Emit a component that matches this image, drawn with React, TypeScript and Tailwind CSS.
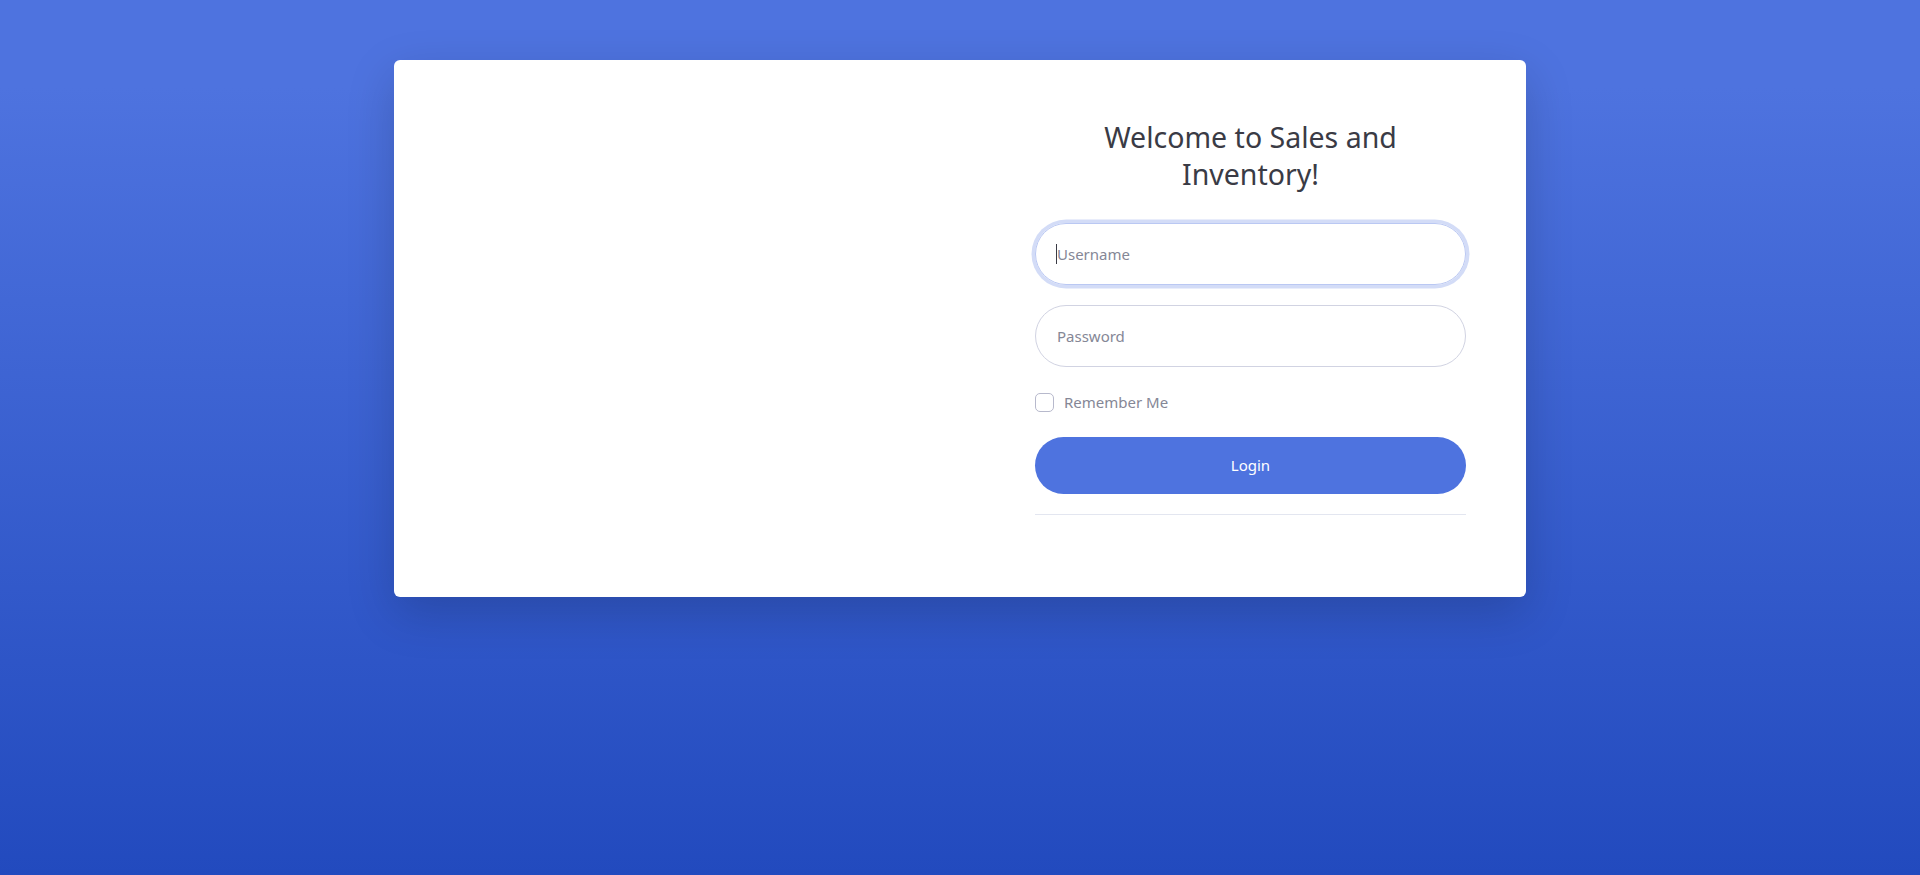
import React from "react";

export default function App() {
  return (
    <div
      className="min-h-[875px] w-full bg-[linear-gradient(180deg,#4e73df_10%,#224abe_100%)] pt-[60px]"
      style={{ fontFamily: '"Noto Sans", "Open Sans", sans-serif' }}
    >
      <div className="mx-auto flex w-[1132px] rounded-[6px] bg-white shadow-[0_16px_48px_rgba(0,0,0,0.175)]">
        <div className="w-[581px]" />
        <div className="w-[551px] px-[60px] pt-[59px] pb-[82px]">
          <h1 className="text-center text-[28.5px] leading-[37px] font-normal text-[#3a3b45]">
            Welcome to Sales and
            <br />
            Inventory!
          </h1>
          <form className="mt-[30px]" onSubmit={(e) => e.preventDefault()}>
            <div className="relative">
              <input
                type="text"
                placeholder="Username"
                className="block h-[62px] w-full rounded-full border border-[#bac8f3] px-[21px] text-[15px] text-[#6e707e] placeholder:text-[#858796] outline-none shadow-[0_0_0_3.5px_rgba(78,115,223,0.25)]"
              />
              <span className="pointer-events-none absolute left-[21px] top-[21px] h-[20px] w-px bg-[#3a3b45]" />
            </div>
            <input
              type="password"
              placeholder="Password"
              className="mt-[20px] block h-[62px] w-full rounded-full border border-[#d1d3e2] px-[21px] text-[15px] text-[#6e707e] placeholder:text-[#858796] outline-none"
            />
            <label className="mt-[23px] flex h-[24px] items-center gap-[10px] text-[15px] text-[#858796]">
              <span className="block h-[19px] w-[19px] rounded-[5px] border border-[#b7b9cc] bg-white" />
              <span>Remember Me</span>
            </label>
            <button
              type="submit"
              className="mt-[23px] block h-[57px] w-full rounded-full bg-[#4e73df] text-center text-[15px] text-white"
            >
              Login
            </button>
            <hr className="mt-[20px] border-0 border-t border-[#e3e6f0]" />
          </form>
        </div>
      </div>
    </div>
  );
}
